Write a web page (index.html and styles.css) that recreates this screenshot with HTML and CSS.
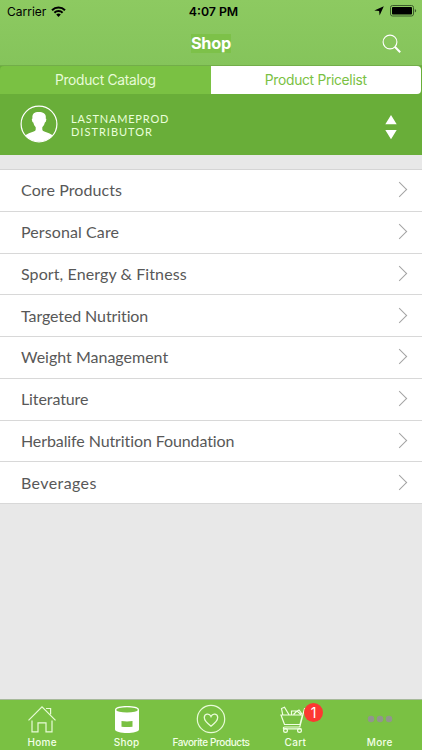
FILE: index.html
```html
<!DOCTYPE html>
<html lang="en">
<head>
    <meta charset="UTF-8">
    <meta name="viewport" content="width=device-width, initial-scale=1.0">
    <title>Shop</title>
    <link rel="stylesheet" href="styles.css">
</head>
<body>
    <div class="app">
        <header class="top">
            <div class="status-bar">
                <div class="carrier">
                    <span>Carrier</span>
                    <svg width="15" height="11" viewBox="0 0 15 11" fill="none" stroke="#000" stroke-width="2">
                        <path d="M1 4.2a9.2 9.2 0 0 1 13 0M3.4 6.7a5.8 5.8 0 0 1 8.2 0"/>
                        <path d="M5.2 8.6a3.3 3.3 0 0 1 4.6 0L7.5 10.9z" fill="#000" stroke="none"/>
                    </svg>
                </div>
                <div class="time">4:07 PM</div>
                <div class="indicators">
                    <svg width="10" height="10" viewBox="0 0 10 10"><path d="M9.8.2 5.6 9.6 5.1 4.9.3 4.5z"/></svg>
                    <svg width="27" height="12" viewBox="0 0 27 12">
                        <rect x=".5" y=".5" width="23" height="10.5" rx="2" fill="none" stroke="#3c5c2c"/>
                        <rect x="2" y="2" width="20" height="7.5" rx=".8"/>
                        <path d="M24.8 4v3.6q1.4-.5 1.4-1.8T24.8 4z" fill="#3c5c2c"/>
                    </svg>
                </div>
            </div>
            <div class="nav-bar">
                <h1>Shop</h1>
                <svg class="search" width="20" height="20" viewBox="0 0 20 20" fill="none" stroke="#fff">
                    <circle cx="8" cy="8" r="6.9" stroke-width="1.1"/>
                    <path d="m12.8 12.8 5.4 5.4" stroke-width="2"/>
                </svg>
            </div>
        </header>

        <div class="segments">
            <div class="segment">Product Catalog</div>
            <div class="segment active">Product Pricelist</div>
        </div>

        <section class="profile">
            <svg width="38" height="38" viewBox="0 0 38 38">
                <circle cx="19" cy="19" r="17.9" fill="none" stroke="#fff" stroke-width="1.2"/>
                <path fill="#fff" d="M5.3 30.3q3-2 8.400-3.700 2-.7 2-2.200v-2.200q-2-1.800-2.400-4.700-1.200-.4-1.500-3 0-1 .7-1.100c-.7-4 1.300-6.500 6.200-6.500 5 0 7.800 2 7 6.500q.8.3.6 1.400-.3 2.400-1.400 2.700-.6 3-2.600 4.800v2.100q0 1.500 2 2.200 5.300 1.700 8.400 3.700A18 18 0 0 1 5.300 30.300z"/>
            </svg>
            <div class="profile-text">
                <div class="profile-name">LASTNAMEPROD</div>
                <div class="profile-role">DISTRIBUTOR</div>
            </div>
            <svg class="sorter" width="12" height="26" viewBox="0 0 12 26" fill="#fff">
                <path d="M6 1l5.700 9.200H.3zM6 25.200.3 16h11.400z"/>
            </svg>
        </section>

        <ul class="categories">
            <li class="loose">Core Products</li>
            <li class="loose">Personal Care</li>
            <li class="loose">Sport, Energy &amp; Fitness</li>
            <li class="tight">Targeted Nutrition</li>
            <li>Weight Management</li>
            <li class="tight">Literature</li>
            <li class="tight">Herbalife Nutrition Foundation</li>
            <li class="looser">Beverages</li>
        </ul>

        <nav class="tab-bar">
            <div class="tab">
                <svg width="30" height="30" viewBox="0 0 30 30" fill="none" stroke="#e8fbd7">
                    <path d="M1.500 16.300 15 2.800l13.500 13.500M19 4.500h4.600v5.800M5 16.500v11.300h6v-9h8v9h6V16.500" stroke-width="1.200"/>
                </svg>
                <span>Home</span>
            </div>
            <div class="tab">
                <svg width="30" height="30" viewBox="0 0 30 30">
                    <path d="M3 5.500C3 .9 27 .9 27 5.500v20c0 4.600-24 4.600-24 0z" fill="#fff"/>
                    <ellipse cx="15" cy="5.900" rx="10.800" ry="2.700" fill="#7ac143"/>
                    <path d="M9.500 17q5.500.8 11 0v5.700q-5.500.8-11 0z" fill="#7ac143"/>
                </svg>
                <span>Shop</span>
            </div>
            <div class="tab wide">
                <svg width="30" height="30" viewBox="0 0 30 30" fill="none" stroke="#e8fbd7">
                    <circle cx="15" cy="15" r="13.700" stroke-width="1.200"/>
                    <path d="M15 22.200Q8.300 17.200 8.300 13.600c0-4 5-4.700 6.700-1 1.700-3.700 6.700-3 6.700 1Q21.700 17.200 15 22.200z" stroke-width="1.300"/>
                </svg>
                <span>Favorite Products</span>
            </div>
            <div class="tab cart">
                <svg width="30" height="30" viewBox="0 0 30 30" fill="none" stroke="#f0ffe3" stroke-width="1.200">
                    <path d="M2 11h21.500L21 20.500H5.500zM28 4.500h-2.500L20.800 23H6q-2 0-1.500 1.800h18M3.700 10.500 2.500 4.500l3-1.300 4.500 7.500M12.500 10.500V7h5.500l4 3.500M14.500 10.500l3-3 2.500-1.500 3 4"/>
                    <circle cx="6.500" cy="26.500" r="1.900"/>
                    <circle cx="20.500" cy="26.500" r="1.900"/>
                </svg>
                <b class="badge">1</b>
                <span>Cart</span>
            </div>
            <div class="tab">
                <svg width="30" height="30" viewBox="0 0 30 30" fill="#91968d">
                    <circle cx="6" cy="15" r="3.200"/><circle cx="15" cy="15" r="3.200"/><circle cx="24" cy="15" r="3.200"/>
                </svg>
                <span>More</span>
            </div>
        </nav>
    </div>
</body>
</html>
```
FILE: styles.css
```css
* {
    box-sizing: border-box;
    margin: 0;
    padding: 0;
}

body {
    font-family: Inter, "Liberation Sans", sans-serif;
    background: #e8e8e8;
}

.app {
    height: 750px;
    display: flex;
    flex-direction: column;
    overflow: hidden;
}

.top {
    height: 65px;
    background: linear-gradient(#8dca61, #85c45b);
}

.status-bar {
    height: 22px;
    display: grid;
    grid-template-columns: 1fr auto 1fr;
    align-items: center;
    padding: 0 5px 0 7px;
    font-size: 12px;
}

.carrier {
    display: flex;
    align-items: center;
    gap: 5px;
}

.time {
    padding-left: 3px;
    font-weight: 600;
    font-size: 12.3px;
}

.indicators {
    display: flex;
    justify-content: flex-end;
    align-items: center;
    gap: 6px;
}

.nav-bar {
    height: 43px;
    display: grid;
    grid-template-columns: 1fr auto 1fr;
    align-items: center;
    padding: 0 20px;
}

.nav-bar h1 {
    grid-column: 2;
    height: 19px;
    line-height: 19px;
    font-size: 16.3px;
    font-weight: 700;
    letter-spacing: -0.2px;
    color: #fff;
    background: #7dc149;
}

.search {
    justify-self: end;
}

.segments {
    height: 29px;
    display: flex;
    border-top: 1px solid #72ad49;
    background: #69ae39;
}

.segment {
    flex: 1;
    border-radius: 4px 0 0 0;
    background: #7ac143;
    color: #e8fbd7;
    font-size: 13.8px;
    letter-spacing: -0.3px;
    line-height: 28px;
    text-align: center;
}

.segment.active {
    border-radius: 0 4px 4px 0;
    margin-right: 1px;
    background: #fff;
    color: #7ac143;
}

.profile {
    height: 61px;
    display: flex;
    align-items: center;
    padding: 0 25px 2px 20px;
    background: #69ae39;
    color: #eaffda;
}

.profile-text {
    margin-left: 13px;
    padding-top: 2px;
    font-family: Lato, sans-serif;
    font-size: 11px;
    line-height: 13px;
}

.profile-name {
    letter-spacing: 0.8px;
}

.profile-role {
    letter-spacing: 1px;
}

.sorter {
    margin-left: auto;
    margin-top: 7px;
}

.categories {
    margin-top: 14px;
    list-style: none;
    border-top: 1px solid #d5d5d5;
    background: #fff;
}

.categories li {
    height: 41.75px;
    display: flex;
    align-items: center;
    justify-content: space-between;
    padding: 0 17px 1px 21px;
    border-bottom: 1px solid #d8d8d8;
    font-family: Lato, sans-serif;
    font-size: 16px;
    font-variant-ligatures: none;
    color: #585858;
}

.categories .loose {
    letter-spacing: 0.1px;
}

.categories .looser {
    letter-spacing: 0.4px;
}

.categories .tight {
    letter-spacing: -0.1px;
}

/* disclosure arrow */
.categories li::after {
    content: "";
    width: 10px;
    height: 10px;
    border: solid #a3a3a3;
    border-width: 1px 1px 0 0;
    transform: rotate(45deg);
}

.tab-bar {
    height: 51px;
    margin-top: auto;
    display: grid;
    grid-template-columns: repeat(5, 1fr);
    border-top: 1px solid #a7b99a;
    background: #7ac143;
}

.tab {
    position: relative;
    display: flex;
    flex-direction: column;
    align-items: center;
    gap: 1px;
    padding-top: 4px;
    color: #f3ffe8;
    font-size: 10px;
    font-weight: 500;
    line-height: 15px;
    letter-spacing: 0.3px;
}

.tab.wide {
    letter-spacing: -0.4px;
    white-space: nowrap;
}

.cart svg {
    margin-right: 2px;
}

.badge {
    position: absolute;
    top: 3px;
    left: 51px;
    width: 19px;
    height: 19px;
    border-radius: 50%;
    background: #fc3831;
    color: #fff;
    font-size: 14px;
    font-weight: 400;
    line-height: 19px;
    letter-spacing: 0;
    text-align: center;
}
```
